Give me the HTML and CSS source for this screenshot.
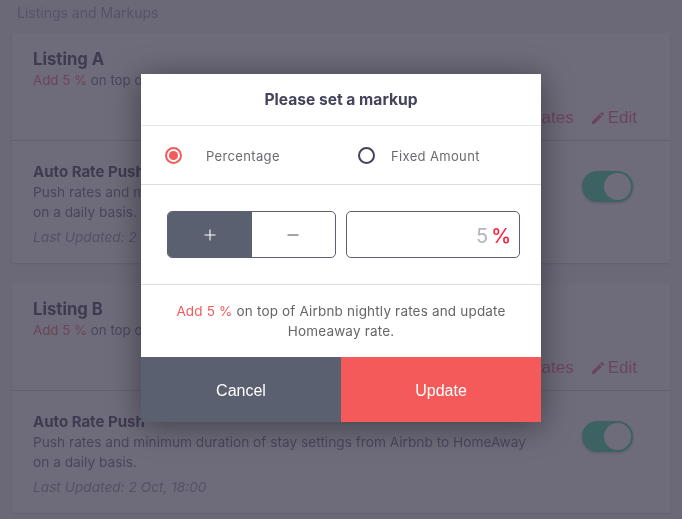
FILE: index.html
```html
<!DOCTYPE html>
<html lang="en">
<head>
<meta charset="utf-8">
<title>Listings and Markups</title>
<link rel="stylesheet" href="styles.css">
</head>
<body>
<main class="page">
  <h1 class="page-title">Listings and Markups</h1>

  <section class="card">
    <div class="listing">
      <h2 class="listing-name">Listing A</h2>
      <p class="listing-desc"><span class="accent">Add 5 %</span> on top of Airbnb nightly rates and update Homeaway rate.</p>
      <div class="listing-actions">
        <span class="action">Update Rates</span>
        <span class="action action-edit">
          <svg class="pencil" viewBox="0 0 24 24" aria-hidden="true"><path d="M3 17.25V21h3.75L17.81 9.94l-3.75-3.75L3 17.25zM20.71 7.04a1 1 0 0 0 0-1.41l-2.34-2.34a1 1 0 0 0-1.41 0l-1.83 1.83 3.75 3.75 1.83-1.83z"/></svg>
          Edit
        </span>
      </div>
    </div>
    <div class="push">
      <div class="push-text">
        <h3 class="push-title">Auto Rate Push</h3>
        <p class="push-desc">Push rates and minimum duration of stay settings from Airbnb to HomeAway on a daily basis.</p>
        <p class="push-date">Last Updated: 2 Oct, 18:00</p>
      </div>
      <span class="toggle"><span class="knob"></span></span>
    </div>
  </section>

  <section class="card">
    <div class="listing">
      <h2 class="listing-name">Listing B</h2>
      <p class="listing-desc"><span class="accent">Add 5 %</span> on top of Airbnb nightly rates and update Homeaway rate.</p>
      <div class="listing-actions">
        <span class="action">Update Rates</span>
        <span class="action action-edit">
          <svg class="pencil" viewBox="0 0 24 24" aria-hidden="true"><path d="M3 17.25V21h3.75L17.81 9.94l-3.75-3.75L3 17.25zM20.71 7.04a1 1 0 0 0 0-1.41l-2.34-2.34a1 1 0 0 0-1.41 0l-1.83 1.83 3.75 3.75 1.83-1.83z"/></svg>
          Edit
        </span>
      </div>
    </div>
    <div class="push">
      <div class="push-text">
        <h3 class="push-title">Auto Rate Push</h3>
        <p class="push-desc">Push rates and minimum duration of stay settings from Airbnb to HomeAway on a daily basis.</p>
        <p class="push-date">Last Updated: 2 Oct, 18:00</p>
      </div>
      <span class="toggle"><span class="knob"></span></span>
    </div>
  </section>
</main>

<div class="overlay">
  <div class="modal">
    <h2 class="modal-title">Please set a markup</h2>
    <div class="radios">
      <span class="radio-item radio-first">
        <span class="radio radio-on"><span class="radio-dot"></span></span>
        <span class="radio-label">Percentage</span>
      </span>
      <span class="radio-item">
        <span class="radio"></span>
        <span class="radio-label">Fixed Amount</span>
      </span>
    </div>
    <div class="controls">
      <div class="segment">
        <span class="seg seg-on">
          <svg class="seg-icon" viewBox="0 0 12 12" aria-hidden="true"><path d="M6 .5v11M.5 6h11"/></svg>
        </span>
        <span class="seg">
          <svg class="seg-icon" viewBox="0 0 12 12" aria-hidden="true"><path d="M.5 6h11"/></svg>
        </span>
      </div>
      <div class="amount"><span class="amount-value">5</span><span class="amount-unit">%</span></div>
    </div>
    <p class="summary"><span class="summary-accent">Add 5 %</span> on top of Airbnb nightly rates and update Homeaway rate.</p>
    <div class="modal-buttons">
      <button class="btn btn-cancel" type="button">Cancel</button>
      <button class="btn btn-update" type="button">Update</button>
    </div>
  </div>
</div>
</body>
</html>
```

FILE: styles.css
```css
* {
  box-sizing: border-box;
}

html,
body {
  margin: 0;
  height: 100%;
  overflow: hidden;
}

body {
  background: #f6f6f8;
  font-family: Inter, "Liberation Sans", sans-serif;
  color: #5c5a72;
}

h1,
h2,
h3,
p {
  margin: 0;
  font-weight: inherit;
}

.page {
  padding: 4px 12px 0;
  filter: blur(0.5px);
}

.page-title {
  margin: 0 0 12px 5px;
  font-size: 14px;
  line-height: 17px;
  color: #b0aebe;
}

.card {
  background: #fff;
  border-radius: 2px;
  box-shadow: 0 1px 3px rgba(0, 0, 0, 0.15);
  margin-bottom: 20px;
}

.listing {
  height: 108px;
  padding: 16px 21px 0;
  border-bottom: 1px solid #d8d8de;
}

.listing-name {
  font-size: 16.7px;
  line-height: 20px;
  font-weight: 700;
  color: #5f5d75;
}

.listing-desc {
  padding-top: 1px;
  font-size: 13.3px;
  line-height: 21px;
  color: #84829a;
}

.accent {
  color: #f4808c;
}

.listing-actions {
  display: flex;
  justify-content: flex-end;
  gap: 16px;
  margin: 17px 12px 0 0;
  font-family: "Liberation Sans", Arial, sans-serif;
  font-size: 17px;
  line-height: 20px;
  color: #f08096;
}

.action-edit {
  display: inline-flex;
  align-items: center;
  gap: 2px;
}

.pencil {
  width: 16px;
  height: 16px;
  fill: currentColor;
}

.push {
  height: 122px;
  padding: 21px 37px 0 21px;
  display: flex;
  justify-content: space-between;
  align-items: flex-start;
}

.push-text {
  width: 495px;
}

.push-title {
  font-size: 15px;
  line-height: 20px;
  font-weight: 700;
  color: #5f5d75;
}

.push-desc {
  font-size: 13.7px;
  line-height: 20px;
  color: #84829a;
}

.push-date {
  margin-top: 6px;
  font-size: 13.7px;
  line-height: 18px;
  font-style: italic;
  color: #aaa8ba;
}

.toggle {
  flex: none;
  width: 51px;
  height: 31px;
  margin-top: 9px;
  padding: 2px;
  display: flex;
  justify-content: flex-end;
  border-radius: 16px;
  background: #5be2b0;
  box-shadow: 0 1px 3px rgba(0, 0, 0, 0.25);
}

.knob {
  width: 27px;
  height: 27px;
  border-radius: 50%;
  background: #fff;
}

.overlay {
  position: fixed;
  inset: 0;
  background: rgba(48, 44, 66, 0.7);
  display: flex;
  justify-content: center;
  align-items: flex-start;
  padding-top: 74px;
}

.modal {
  width: 400px;
  background: #fff;
  box-shadow: 0 4px 30px rgba(0, 0, 0, 0.42);
}

.modal-title {
  height: 52px;
  border-bottom: 1px solid #e6e6e8;
  font-size: 15.6px;
  line-height: 51px;
  font-weight: 700;
  text-align: center;
  color: #45435a;
}

.radios {
  height: 59px;
  padding-left: 24px;
  border-bottom: 1px solid #dcdcde;
  display: flex;
  align-items: center;
}

.radio-item {
  display: inline-flex;
  align-items: center;
}

.radio-first {
  width: 193px;
}

.radio {
  width: 17px;
  height: 17px;
  border: 2px solid #45435a;
  border-radius: 50%;
  display: inline-flex;
  align-items: center;
  justify-content: center;
}

.radio-on {
  border-color: #f55a5a;
}

.radio-dot {
  width: 9px;
  height: 9px;
  border-radius: 50%;
  background: #f55a5a;
}

.radio-label {
  margin: 2px 0 0 16px;
  font-size: 13px;
  line-height: 18px;
  letter-spacing: 0.35px;
  color: #6b6b6f;
}

.radio-first .radio-label {
  margin-left: 24px;
}

.controls {
  height: 100px;
  padding: 26px 21px 0 26px;
  border-bottom: 1px solid #dcdcde;
  display: flex;
  gap: 10px;
}

.segment {
  width: 169px;
  height: 47px;
  display: flex;
  border: 1px solid #5b6070;
  border-radius: 5px;
  overflow: hidden;
}

.seg {
  flex: 1;
  display: flex;
  align-items: center;
  justify-content: center;
  color: #45485a;
}

.seg-on {
  background: #5b6070;
  color: #fff;
}

.seg-icon {
  width: 12px;
  height: 12px;
  fill: none;
  stroke: currentColor;
  stroke-width: 1.1;
}

.amount {
  flex: 1;
  height: 47px;
  border: 1px solid #5b6070;
  border-radius: 5px;
  padding: 3px 8px 0 0;
  display: flex;
  justify-content: flex-end;
  align-items: center;
  gap: 3px;
}

.amount-value {
  font-size: 20px;
  color: #b4b4bc;
}

.amount-unit {
  font-size: 20px;
  font-weight: 500;
  color: #ff1f3d;
}

.summary {
  height: 72px;
  padding: 16px 30px 0;
  font-size: 13.5px;
  line-height: 20px;
  letter-spacing: 0.18px;
  text-align: center;
  color: #666;
}

.summary-accent {
  color: #f55a5a;
}

.modal-buttons {
  display: flex;
  height: 65px;
}

.btn {
  flex: 1;
  border: 0;
  padding: 2px 0 0;
  font-family: "Liberation Sans", Arial, sans-serif;
  font-size: 16px;
  color: #fff;
}

.btn-cancel {
  background: #5b6070;
}

.btn-update {
  background: #f55a5a;
}
```
